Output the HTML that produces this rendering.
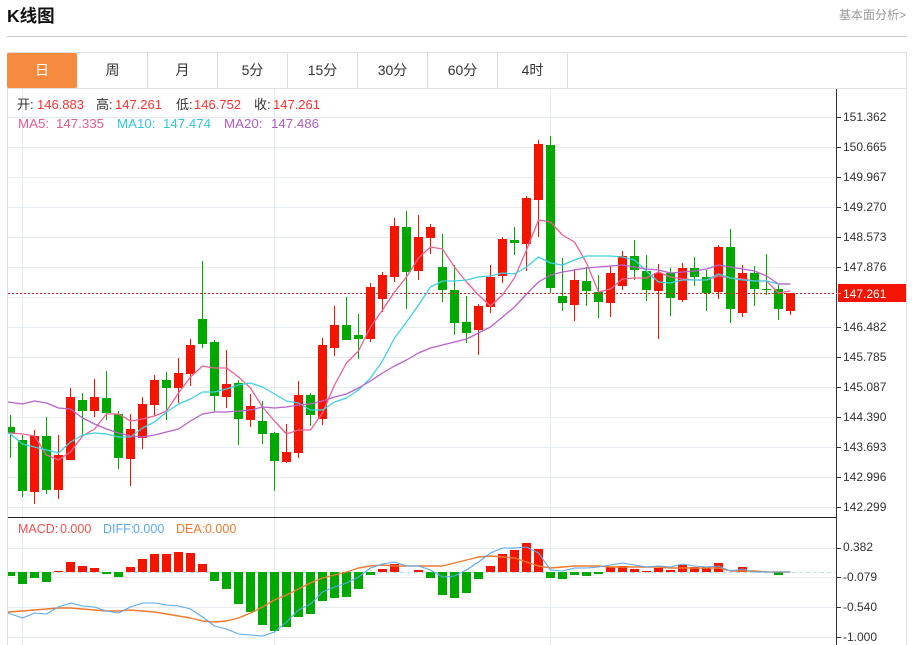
<!DOCTYPE html>
<html><head><meta charset="utf-8"><style>
html,body{margin:0;padding:0;background:#fff}
body{width:913px;height:645px;overflow:hidden;position:relative;font-family:"Liberation Sans","Noto Sans CJK SC",sans-serif}
.a{position:absolute;white-space:nowrap;line-height:16px}
.tab{position:absolute;top:53px;height:35px;line-height:35px;width:69px;text-align:center;font-size:14px;color:#333;border-right:1px solid #ddd;box-sizing:content-box}
svg{position:absolute;left:0;top:0}
.ax{font-size:12px;fill:#333;font-family:"Liberation Sans",sans-serif}
</style></head><body>
<div class="a" style="left:7px;top:6px;font-size:17.5px;font-weight:bold;color:#111;line-height:20px">K线图</div>
<div class="a" style="right:7px;top:7px;font-size:12px;color:#999">基本面分析&gt;</div>
<div class="a" style="left:7px;top:36px;width:900px;height:1px;background:#ccc"></div>
<svg width="913" height="645" viewBox="0 0 913 645">
<g shape-rendering="crispEdges" fill="none">
<path d="M7.5 52.5H906.5V645M7.5 52.5V645M7.5 88.5H906.5" stroke="#e0e0e0"/>
<path d="M8 117.5H836M8 147.5H836M8 177.5H836M8 207.5H836M8 237.5H836M8 267.5H836M8 297.5H836M8 327.5H836M8 357.5H836M8 387.5H836M8 417.5H836M8 447.5H836M8 477.5H836M8 507.5H836M8 548.5H836M8 577.5H836M8 607.5H836M8 637.5H836M22.5 89V645M274.5 89V645M550.5 89V645" stroke="#e4ebf1"/>
<path d="M8 517.5H836" stroke="#222"/>
<path d="M836.5 89V645" stroke="#333"/>
<path d="M836 117.5h5M836 147.5h5M836 177.5h5M836 207.5h5M836 237.5h5M836 267.5h5M836 327.5h5M836 357.5h5M836 387.5h5M836 417.5h5M836 447.5h5M836 477.5h5M836 507.5h5M836 548.5h5M836 577.5h5M836 607.5h5M836 637.5h5" stroke="#333"/>
<path d="M8 572.5H836" stroke="#b5e0ee" stroke-dasharray="4 3"/>
<!-- wicks red -->
<path stroke="#f41500" d="M34.5 430V504M58.5 435V499M70.5 388V460M94.5 379V417M130.5 414V486M142.5 397V449M154.5 375V416M178.5 358V403M190.5 339V386M226.5 350V408M250.5 394V427M286.5 424V463M298.5 381V458M322.5 338V425M334.5 306V356M370.5 283V342M382.5 272V312M394.5 218V282M418.5 215V280M430.5 224V254M478.5 304V355M490.5 265V313M502.5 237V283M526.5 196V271M538.5 140V237M574.5 269V321M610.5 266V317M622.5 251V290M658.5 264V339M682.5 263V302M718.5 245V299M742.5 265V317M790.5 293V315"/>
<!-- wicks green -->
<path stroke="#00a800" d="M10.5 415V458M22.5 435V497M46.5 417V494M82.5 393V435M106.5 371V420M118.5 411V469M166.5 372V420M202.5 261V348M214.5 340V412M238.5 380V445M262.5 401V444M274.5 432V491M310.5 393V426M346.5 297V340M358.5 314V359M406.5 211V309M442.5 234V302M454.5 265V335M466.5 296V343M514.5 227V255M550.5 136V293M562.5 258V311M586.5 267V306M598.5 275V318M634.5 240V280M646.5 255V301M670.5 268V316M694.5 257V286M706.5 270V311M730.5 229V323M754.5 266V306M766.5 254V295M778.5 285V320"/>
</g>
<g shape-rendering="crispEdges">
<path fill="#f41500" d="M30 436h9V492h-9zM54 455h9V490h-9zM66 397h9V460h-9zM90 397h9V411h-9zM126 429h9V459h-9zM138 404h9V438h-9zM150 380h9V405h-9zM174 373h9V388h-9zM186 345h9V374h-9zM222 384h9V397h-9zM246 406h9V420h-9zM282 452h9V462h-9zM294 395h9V453h-9zM318 345h9V419h-9zM330 325h9V348h-9zM366 287h9V339h-9zM378 275h9V299h-9zM390 226h9V277h-9zM414 237h9V271h-9zM426 227h9V238h-9zM474 306h9V330h-9zM486 277h9V307h-9zM498 239h9V276h-9zM522 198h9V244h-9zM534 144h9V200h-9zM570 280h9V305h-9zM606 273h9V303h-9zM618 256h9V286h-9zM654 273h9V291h-9zM678 268h9V300h-9zM714 247h9V292h-9zM738 273h9V313h-9zM786 293h9V311h-9z"/>
<path fill="#00a800" d="M8 427h7V433h-7zM18 440h9V491h-9zM42 436h9V490h-9zM78 400h9V411h-9zM102 398h9V413h-9zM114 414h9V458h-9zM162 380h9V388h-9zM198 319h9V344h-9zM210 342h9V396h-9zM234 383h9V419h-9zM258 421h9V434h-9zM270 433h9V461h-9zM306 395h9V415h-9zM342 325h9V340h-9zM354 335h9V339h-9zM402 227h9V272h-9zM438 267h9V290h-9zM450 290h9V323h-9zM462 322h9V333h-9zM510 240h9V243h-9zM546 145h9V288h-9zM558 296h9V303h-9zM582 281h9V291h-9zM594 292h9V302h-9zM630 256h9V270h-9zM642 271h9V290h-9zM666 273h9V298h-9zM690 268h9V277h-9zM702 277h9V293h-9zM726 247h9V309h-9zM750 273h9V289h-9zM762 289h9V290h-9zM774 289h9V309h-9z"/>
<!-- macd bars -->
<path fill="#f41500" d="M54 571h9v1h-9zM66 562h9v10h-9zM78 566h9v6h-9zM90 568h9v4h-9zM126 567h9v5h-9zM138 559h9v13h-9zM150 554h9v18h-9zM162 554h9v18h-9zM174 552h9v20h-9zM186 553h9v19h-9zM198 564h9v8h-9zM378 569h9v3h-9zM390 564h9v8h-9zM414 570h9v2h-9zM486 566h9v6h-9zM498 554h9v18h-9zM510 550h9v22h-9zM522 543h9v29h-9zM534 549h9v23h-9zM606 567h9v5h-9zM618 566h9v6h-9zM630 569h9v3h-9zM642 571h9v1h-9zM654 568h9v4h-9zM666 570h9v2h-9zM678 565h9v7h-9zM690 567h9v5h-9zM702 567h9v5h-9zM714 563h9v9h-9zM738 567h9v5h-9zM750 571h9v1h-9z"/>
<path fill="#00a800" d="M8 572h7v4h-7zM18 572h9v12h-9zM30 572h9v6h-9zM42 572h9v10h-9zM102 572h9v2h-9zM114 572h9v5h-9zM210 572h9v9h-9zM222 572h9v17h-9zM234 572h9v32h-9zM246 572h9v40h-9zM258 572h9v53h-9zM270 572h9v59h-9zM282 572h9v55h-9zM294 572h9v45h-9zM306 572h9v42h-9zM318 572h9v29h-9zM330 572h9v26h-9zM342 572h9v25h-9zM354 572h9v17h-9zM366 572h9v3h-9zM426 572h9v6h-9zM438 572h9v23h-9zM450 572h9v26h-9zM462 572h9v21h-9zM474 572h9v7h-9zM546 572h9v6h-9zM558 572h9v7h-9zM570 572h9v3h-9zM582 572h9v4h-9zM594 572h9v2h-9zM774 572h9v3h-9z"/>
</g>
<path d="M8 293.5H838" stroke="#e0201a" stroke-dasharray="2 2" fill="none" shape-rendering="crispEdges"/>
<rect x="838" y="284" width="68" height="18" fill="#f41500"/>
<rect x="836" y="293" width="5" height="1" fill="#f99"/>
<g fill="none" stroke-width="1.3" stroke-linejoin="round">
<polyline stroke="#ef6096" points="8,433 10.5,433 22.5,434 34.5,436 46.5,455 58.5,460 70.5,452 82.5,436 94.5,429 106.5,414 118.5,414 130.5,421 142.5,419 154.5,416 166.5,411 178.5,393 190.5,377 202.5,366 214.5,368 226.5,368 238.5,377 250.5,388 262.5,407 274.5,421 286.5,434 298.5,430 310.5,430 322.5,413 334.5,385 346.5,363 358.5,351 370.5,327 382.5,310 394.5,292 406.5,277 418.5,258 430.5,247 442.5,249 454.5,267 466.5,282 478.5,295 490.5,306 502.5,295 514.5,278 526.5,250 538.5,220 550.5,222 562.5,235 574.5,242 586.5,263 598.5,292 610.5,289 622.5,279 634.5,278 646.5,278 658.5,272 670.5,277 682.5,279 694.5,280 706.5,280 718.5,276 730.5,278 742.5,279 754.5,281 766.5,281 778.5,293 790.5,291"/>
<polyline stroke="#40d0e4" points="8,433 10.5,434 22.5,444 34.5,447 46.5,450 58.5,453 70.5,442 82.5,435 94.5,433 106.5,434 118.5,437 130.5,437 142.5,428 154.5,422 166.5,412 178.5,404 190.5,399 202.5,392 214.5,392 226.5,389 238.5,385 250.5,383 262.5,387 274.5,394 286.5,401 298.5,403 310.5,410 322.5,410 334.5,402 346.5,398 358.5,390 370.5,378 382.5,361 394.5,338 406.5,322 418.5,305 430.5,287 442.5,281 454.5,281 466.5,280 478.5,277 490.5,276 502.5,273 514.5,274 526.5,267 538.5,257 550.5,263 562.5,265 574.5,260 586.5,256 598.5,256 610.5,256 622.5,257 634.5,260 646.5,271 658.5,282 670.5,283 682.5,280 694.5,280 706.5,280 718.5,274 730.5,278 742.5,280 754.5,281 766.5,281 778.5,284 790.5,284"/>
<polyline stroke="#b862cc" points="8,402 22.5,404 34.5,401 46.5,403 58.5,408 70.5,409 82.5,418 94.5,424 106.5,429 118.5,433 130.5,436 142.5,437 154.5,435 166.5,432 178.5,429 190.5,421 202.5,414 214.5,412 226.5,412 238.5,411 250.5,410 262.5,407 274.5,408 286.5,407 298.5,405 310.5,404 322.5,401 334.5,397 346.5,394 358.5,388 370.5,381 382.5,373 394.5,366 406.5,360 418.5,353 430.5,348 442.5,345 454.5,342 466.5,339 478.5,333 490.5,327 502.5,317 514.5,307 526.5,294 538.5,282 550.5,275 562.5,272 574.5,270 586.5,268 598.5,267 610.5,266 622.5,265 634.5,267 646.5,269 658.5,270 670.5,273 682.5,272 694.5,271 706.5,269 718.5,265 730.5,267 742.5,269 754.5,271 766.5,276 778.5,284 790.5,284"/>
<polyline stroke="#f07a2e" stroke-width="1.4" points="8,612 22.5,611 34.5,610 46.5,609 58.5,608 70.5,608 82.5,609 94.5,610 106.5,611 118.5,611 130.5,610 142.5,611 154.5,612 166.5,614 178.5,616 190.5,618 202.5,621 214.5,622 226.5,621 238.5,618 250.5,613 262.5,607 274.5,600 286.5,595 298.5,589 310.5,583 322.5,578 334.5,575 346.5,572 358.5,568 370.5,566 382.5,565 394.5,566 406.5,566 418.5,566 430.5,566 442.5,566 454.5,563 466.5,560 478.5,557 490.5,556 502.5,557 514.5,558 526.5,562 538.5,566 550.5,568 562.5,567 574.5,566 586.5,566 598.5,566 610.5,567 622.5,567 634.5,567 646.5,567 658.5,567 670.5,568 682.5,568 694.5,568 706.5,568 718.5,568 730.5,571 742.5,571 754.5,571 766.5,572 778.5,572 790.5,572"/>
<polyline stroke="#5aaaf0" stroke-width="1.1" points="8,613 22.5,618 34.5,613 46.5,614 58.5,607 70.5,603 82.5,606 94.5,607 106.5,611 118.5,613 130.5,607 142.5,603 154.5,603 166.5,605 178.5,606 190.5,609 202.5,617 214.5,626 226.5,629 238.5,634 250.5,635 262.5,636 274.5,632 286.5,622 298.5,610 310.5,604 322.5,592 334.5,587 346.5,583 358.5,577 370.5,568 382.5,564 394.5,562 406.5,566 418.5,566 430.5,570 442.5,577 454.5,576 466.5,570 478.5,562 490.5,553 502.5,548 514.5,548 526.5,547 538.5,553 550.5,570 562.5,571 574.5,568 586.5,568 598.5,567 610.5,565 622.5,563 634.5,565 646.5,567 658.5,566 670.5,567 682.5,564 694.5,566 706.5,567 718.5,566 730.5,571 742.5,569 754.5,572 766.5,572 778.5,572 790.5,572"/>
</g>
<g class="ax">
<text x="843" y="121">151.362</text><text x="843" y="151">150.665</text><text x="843" y="181">149.967</text><text x="843" y="211">149.270</text><text x="843" y="241">148.573</text><text x="843" y="271">147.876</text><text x="843" y="331">146.482</text><text x="843" y="361">145.785</text><text x="843" y="391">145.087</text><text x="843" y="421">144.390</text><text x="843" y="451">143.693</text><text x="843" y="481">142.996</text><text x="843" y="511">142.299</text>
<text x="843" y="551">0.382</text><text x="843" y="581">-0.079</text><text x="843" y="611">-0.540</text><text x="843" y="641">-1.000</text>
<text x="843" y="298" style="fill:#fff">147.261</text>
</g>
</svg>
<div class="tab" style="left:7px;width:70px;background:#f68b3f;color:#fff;border-radius:2px;border-right:0;top:53px">日</div>
<div class="tab" style="left:78px">周</div>
<div class="tab" style="left:148px">月</div>
<div class="tab" style="left:218px">5分</div>
<div class="tab" style="left:288px">15分</div>
<div class="tab" style="left:358px">30分</div>
<div class="tab" style="left:428px">60分</div>
<div class="tab" style="left:498px">4时</div>
<div class="a" style="left:17px;top:97px;font-size:13px;color:#333">开:</div><div class="a" style="left:37px;top:97px;font-size:13px;color:#ff3232">146.883</div>
<div class="a" style="left:96px;top:97px;font-size:13px;color:#333">高:</div><div class="a" style="left:115px;top:97px;font-size:13px;color:#ff3232">147.261</div>
<div class="a" style="left:176px;top:97px;font-size:13px;color:#333">低:</div><div class="a" style="left:194px;top:97px;font-size:13px;color:#ff3232">146.752</div>
<div class="a" style="left:254px;top:97px;font-size:13px;color:#333">收:</div><div class="a" style="left:273px;top:97px;font-size:13px;color:#ff3232">147.261</div>
<div class="a" style="left:18px;top:116px;font-size:13.3px;color:#ec5a8f">MA5:</div><div class="a" style="left:56px;top:116px;font-size:13.3px;color:#ec5a8f">147.335</div>
<div class="a" style="left:117px;top:116px;font-size:13.3px;color:#2fc8dc">MA10:</div><div class="a" style="left:163px;top:116px;font-size:13.3px;color:#2fc8dc">147.474</div>
<div class="a" style="left:224px;top:116px;font-size:13.3px;color:#b05cc8">MA20:</div><div class="a" style="left:271px;top:116px;font-size:13.3px;color:#b05cc8">147.486</div>
<div class="a" style="left:18px;top:521px;font-size:12.5px;color:#ee5050">MACD:</div><div class="a" style="left:60px;top:521px;font-size:12.5px;color:#ee5050">0.000</div>
<div class="a" style="left:103px;top:521px;font-size:12.5px;color:#5aaaf0">DIFF:</div><div class="a" style="left:133px;top:521px;font-size:12.5px;color:#5aaaf0">0.000</div>
<div class="a" style="left:176px;top:521px;font-size:12.5px;color:#f07a2e">DEA:</div><div class="a" style="left:205px;top:521px;font-size:12.5px;color:#f07a2e">0.000</div>
</body></html>
